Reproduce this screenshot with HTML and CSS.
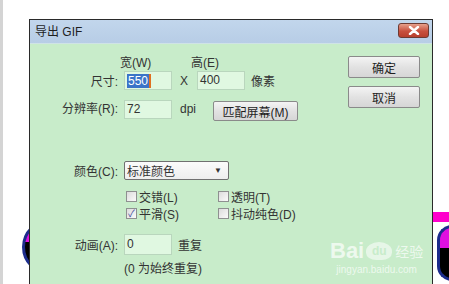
FILE: index.html
```html
<!DOCTYPE html>
<html lang="zh-CN">
<head>
    <meta charset="UTF-8">
    <title>导出 GIF</title>
    <link rel="stylesheet" href="styles.css">
</head>
<body>
    <div class="ball ball-left"></div>
    <div class="pink-bar"></div>
    <div class="ball ball-right"></div>

    <div class="dialog">
        <div class="titlebar">
            <span class="title">导出 GIF</span>
            <span class="close">
                <svg width="12" height="9" viewBox="0 0 12 9"><path d="M2 1 L10 8 M10 1 L2 8" stroke="#fff" stroke-width="2.4" stroke-linecap="round"/></svg>
            </span>
        </div>
        <div class="content">
            <div class="form">
                <div class="row heads">
                    <span class="head-w">宽(W)</span>
                    <span class="head-h">高(E)</span>
                </div>
                <div class="row size-row">
                    <label class="lbl">尺寸:</label>
                    <span class="input"><span class="selected">550</span><span class="caret"></span></span>
                    <span class="sep">X</span>
                    <span class="input">400</span>
                    <span class="unit">像素</span>
                </div>
                <div class="row res-row">
                    <label class="lbl">分辨率(R):</label>
                    <span class="input">72</span>
                    <span class="unit dpi">dpi</span>
                    <button class="btn match">匹配屏幕(M)</button>
                </div>
                <div class="row color-row">
                    <label class="lbl">颜色(C):</label>
                    <span class="select">标准颜色<span class="arrow">▼</span></span>
                </div>
                <div class="checks">
                    <span class="check"><span class="box"></span>交错(L)</span>
                    <span class="check"><span class="box"></span>透明(T)</span>
                    <span class="check"><span class="box on">✓</span>平滑(S)</span>
                    <span class="check"><span class="box"></span>抖动纯色(D)</span>
                </div>
                <div class="row anim-row">
                    <label class="lbl">动画(A):</label>
                    <span class="input tall">0</span>
                    <span class="unit">重复</span>
                </div>
                <div class="note">(0 为始终重复)</div>
            </div>
            <div class="actions">
                <button class="btn">确定</button>
                <button class="btn">取消</button>
            </div>
            <div class="watermark">
                <div class="wm-logo"><span class="bai">Bai</span><span class="paw">du</span><span class="jy">经验</span></div>
                <div class="wm-url">jingyan.baidu.com</div>
            </div>
        </div>
    </div>
</body>
</html>
```

FILE: styles.css
```css
body {
    margin: 0;
    width: 449px;
    height: 284px;
    overflow: hidden;
    background-color: #ffffff;
    border-left: 3px solid #d4d4d4;
    box-sizing: border-box;
    position: relative;
    font-family: "Liberation Sans", "Noto Sans CJK SC", sans-serif;
    font-size: 12px;
    color: #333333;
}

/* decoracion detras del dialogo */
.ball {
    position: absolute;
    width: 50px;
    height: 50px;
    border-radius: 50%;
    border: 3px solid #1c2c8c;
    background: linear-gradient(#e010e0 0 40%, #000000 40%);
}

.ball-left {
    left: 19px;
    top: 219px;
}

.ball-right {
    left: 434px;
    top: 225px;
    width: 12px;
    border-radius: 28px 0 0 28px;
    border-right: none;
}

.pink-bar {
    position: absolute;
    left: 428px;
    top: 212px;
    width: 18px;
    height: 10px;
    background-color: #ff00cc;
}

.dialog {
    position: relative;
    z-index: 1;
    margin: 19px 0 0 26px;
    width: 402px;
    height: 270px;
    border: 1px solid #2a2a2a;
    border-bottom: none;
    display: flex;
    flex-direction: column;
}

.titlebar {
    height: 23px;
    background: linear-gradient(#c2d6ec, #b7cde6);
    display: flex;
    align-items: center;
    justify-content: space-between;
    padding: 0 3px 0 5px;
    border-bottom: 1px solid #cfe3e6;
}

.title {
    color: #1e1e1e;
    margin-top: -3px;
}

.close {
    width: 29px;
    height: 13px;
    margin-top: -3px;
    border: 1px solid #6e3a32;
    border-radius: 3px;
    background: linear-gradient(#e6a08c, #c8503e 55%, #b8402e);
    display: flex;
    align-items: center;
    justify-content: center;
}

.content {
    flex: 1;
    background-color: #c8ecca;
    display: flex;
    position: relative;
}

.form {
    width: 310px;
}

.row {
    display: flex;
    align-items: center;
}

.lbl {
    width: 88px;
    text-align: right;
    margin-right: 6px;
}

.heads {
    margin-top: 10px;
    height: 14px;
    padding-left: 90px;
}

.head-w {
    width: 71px;
}

.size-row {
    margin-top: 3px;
}

.res-row {
    margin-top: 10px;
    align-items: flex-start;
}

.res-row .lbl,
.res-row .dpi {
    line-height: 19px;
}

.input {
    width: 44px;
    height: 17px;
    border: 1px solid #b9d6bd;
    background-color: #e0f8e1;
    padding-left: 2px;
    line-height: 17px;
    box-sizing: content-box;
    display: flex;
    align-items: center;
}

.input.tall {
    height: 19px;
}

.selected {
    background-color: #3b73c8;
    color: #ffffff;
    padding: 0 1px;
    line-height: 14px;
}

.caret {
    width: 2px;
    height: 14px;
    background-color: #e07020;
}

.sep {
    margin: 0 9px 0 8px;
}

.unit {
    margin-left: 6px;
}

.dpi {
    margin-left: 8px;
}

.btn {
    font-family: "Liberation Sans", "Noto Sans CJK SC", sans-serif;
    font-size: 12px;
    color: #1e1e1e;
    border: 1px solid #8a8a8a;
    border-radius: 2px;
    background: linear-gradient(#f4f4f4, #e2e2e2 50%, #d6d6d6);
    padding: 0;
    height: 21px;
}

.match {
    width: 85px;
    margin-left: 17px;
    margin-top: 1px;
    height: 20px;
}

.color-row {
    margin-top: 40px;
}

.select {
    width: 101px;
    height: 17px;
    border: 1px solid #707070;
    border-radius: 2px;
    background: linear-gradient(#fbfbfb, #eeeeee);
    padding-left: 2px;
    display: flex;
    align-items: center;
    justify-content: space-between;
}

.arrow {
    font-size: 8px;
    margin-right: 6px;
}

.checks {
    margin: 8px 0 0 96px;
    display: grid;
    grid-template-columns: 92px auto;
    grid-auto-rows: 17px;
}

.check {
    display: flex;
    align-items: center;
}

.box {
    width: 9px;
    height: 9px;
    border: 1px solid #8e9090;
    background: linear-gradient(135deg, #dcdcdc, #fafafa);
    margin-right: 2px;
    font-size: 10px;
    line-height: 9px;
    color: #3a4a9a;
    text-align: center;
}

.anim-row {
    margin-top: 12px;
}

.note {
    margin: 4px 0 0 94px;
}

.actions {
    display: flex;
    flex-direction: column;
    gap: 8px;
    margin: 12px 0 0 8px;
}

.actions .btn {
    width: 72px;
    height: 22px;
}

/* marca de agua */
.watermark {
    position: absolute;
    left: 300px;
    top: 196px;
    color: rgba(255, 255, 255, 0.7);
    text-align: center;
}

.wm-logo {
    display: flex;
    align-items: flex-end;
}

.bai {
    font-size: 22px;
    font-weight: bold;
    line-height: 22px;
}

.paw {
    font-size: 12px;
    font-weight: bold;
    width: 26px;
    height: 18px;
    border-radius: 50% 50% 40% 40%;
    background-color: rgba(255, 255, 255, 0.55);
    color: #c8ecca;
    line-height: 18px;
    margin: 0 3px 2px 2px;
}

.jy {
    font-size: 14px;
    line-height: 20px;
}

.wm-url {
    font-size: 10px;
    margin-top: 2px;
}
```
